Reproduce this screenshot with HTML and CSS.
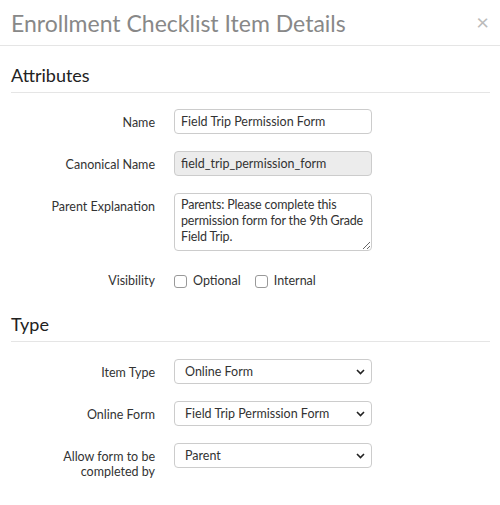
FILE: index.html
```html
<!DOCTYPE html>
<html lang="en">
<head>
    <meta charset="UTF-8">
    <meta name="viewport" content="width=device-width, initial-scale=1.0">
    <title>Enrollment Checklist Item Details</title>
    <link rel="stylesheet" href="styles.css">
</head>
<body>
    <div class="modal">
        <div class="modal-header">
            <h1>Enrollment Checklist Item Details</h1>
            <span class="close">&times;</span>
        </div>
        <div class="modal-body">
            <h2>Attributes</h2>
            <div class="field">
                <label for="name">Name</label>
                <input type="text" id="name" value="Field Trip Permission Form">
            </div>
            <div class="field">
                <label for="canonical">Canonical Name</label>
                <input type="text" id="canonical" value="field_trip_permission_form" readonly>
            </div>
            <div class="field">
                <label for="explanation">Parent Explanation</label>
                <textarea id="explanation" rows="3">Parents: Please complete this permission form for the 9th Grade Field Trip.</textarea>
            </div>
            <div class="field checks">
                <label>Visibility</label>
                <div class="check-group">
                    <label class="check"><input type="checkbox"> Optional</label>
                    <label class="check"><input type="checkbox"> Internal</label>
                </div>
            </div>

            <h2 class="type-title">Type</h2>
            <div class="field">
                <label for="item-type">Item Type</label>
                <div class="select-wrap">
                    <select id="item-type">
                        <option>Online Form</option>
                    </select>
                    <svg class="chevron" width="9" height="6" viewBox="0 0 9 6"><path d="M1 1l3.5 3.5L8 1" fill="none" stroke="#222" stroke-width="1.6"/></svg>
                </div>
            </div>
            <div class="field">
                <label for="online-form">Online Form</label>
                <div class="select-wrap">
                    <select id="online-form">
                        <option>Field Trip Permission Form</option>
                    </select>
                    <svg class="chevron" width="9" height="6" viewBox="0 0 9 6"><path d="M1 1l3.5 3.5L8 1" fill="none" stroke="#222" stroke-width="1.6"/></svg>
                </div>
            </div>
            <div class="field">
                <label for="completed-by">Allow form to be completed by</label>
                <div class="select-wrap">
                    <select id="completed-by">
                        <option>Parent</option>
                    </select>
                    <svg class="chevron" width="9" height="6" viewBox="0 0 9 6"><path d="M1 1l3.5 3.5L8 1" fill="none" stroke="#222" stroke-width="1.6"/></svg>
                </div>
            </div>
        </div>
    </div>
</body>
</html>
```

FILE: styles.css
```css
body, html {
    margin: 0;
    padding: 0;
    background-color: #fff;
    font-family: Lato, "Open Sans", sans-serif;
    color: #333;
}

.modal {
    width: 500px;
}

.modal-header {
    height: 46px;
    border-bottom: 1px solid #e5e5e5;
    display: flex;
    align-items: center;
    justify-content: space-between;
    padding: 0 11px 0 11px;
    box-sizing: border-box;
}

.modal-header h1 {
    margin: 0;
    font-size: 23px;
    font-weight: normal;
    color: #888;
    line-height: 28px;
}

.close {
    font-size: 22px;
    color: #bbb;
    line-height: 20px;
    margin-top: -2px;
}

.modal-body {
    padding: 0 10px 0 11px;
}

.modal-body h2 {
    margin: 17px 0 16px;
    padding-bottom: 5px;
    font-size: 18px;
    line-height: 24px;
    font-weight: normal;
    color: #222;
    border-bottom: 1px solid #e5e5e5;
}

.modal-body h2.type-title {
    margin-top: 19px;
    margin-bottom: 17px;
}

.field {
    display: grid;
    grid-template-columns: 144px 198px;
    column-gap: 19px;
    margin-bottom: 17px;
    font-size: 12.5px;
}

.field > label {
    text-align: right;
    padding-top: 6px;
    line-height: 15px;
    color: #333;
}

.field input[type="text"],
.field textarea,
.field select {
    width: 198px;
    box-sizing: border-box;
    border: 1px solid #ccc;
    border-radius: 4px;
    font-family: Lato, "Open Sans", sans-serif;
    font-size: 12.5px;
    color: #333;
    background-color: #fff;
}

.field input[type="text"] {
    height: 25px;
    padding: 0 6px;
}

.field input[readonly] {
    background-color: #ececec;
}

.field textarea {
    display: block;
    height: 58px;
    padding: 3px 2px 3px 6px;
    line-height: 16px;
    letter-spacing: -0.15px;
    resize: vertical;
}

.select-wrap {
    position: relative;
    width: 198px;
}

.field select {
    display: block;
    appearance: none;
    height: 25px;
    padding: 0 24px 0 10px;
}

.chevron {
    position: absolute;
    right: 7px;
    top: 10px;
    pointer-events: none;
}

.checks > label {
    padding-top: 5px;
}

.check-group {
    display: flex;
    align-items: center;
    gap: 14px;
    height: 25px;
}

.check {
    display: flex;
    align-items: center;
    gap: 6px;
}

.check input {
    appearance: none;
    width: 13px;
    height: 13px;
    margin: 2px 0 0;
    border: 1px solid #999;
    border-radius: 3px;
    background-color: #fff;
}
```
